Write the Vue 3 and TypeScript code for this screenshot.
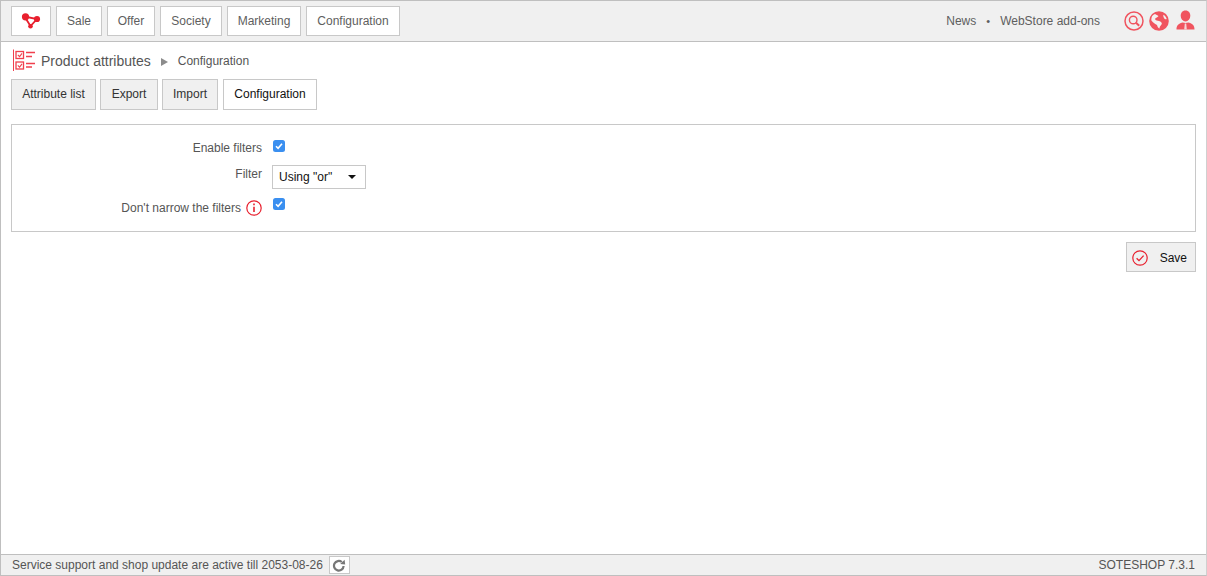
<script setup lang="ts">
const menu: string[] = ['Sale', 'Offer', 'Society', 'Marketing', 'Configuration']
const tabs: { label: string; active?: boolean }[] = [
  { label: 'Attribute list' },
  { label: 'Export' },
  { label: 'Import' },
  { label: 'Configuration', active: true },
]
</script>

<template>
  <div class="page">
    <header class="top">
      <a class="nav-btn logo">
        <svg width="20" height="16" viewBox="0 0 20 16">
          <path d="M3.5 3.5 L16 6 L9.5 13 Z" fill="none" stroke="#e8202e" stroke-width="1.8" />
          <circle cx="4.5" cy="3.8" r="3.6" fill="#e8202e" />
          <circle cx="16" cy="6" r="3.1" fill="#e8202e" />
          <circle cx="9.5" cy="13.2" r="2.3" fill="#e8202e" />
        </svg>
      </a>
      <nav class="menu">
        <a v-for="m in menu" :key="m" class="nav-btn">{{ m }}</a>
      </nav>
      <div class="right">
        <span class="link">News</span>
        <span class="dot">•</span>
        <span class="link">WebStore add-ons</span>
        <div class="icons">
          <svg width="20" height="20" viewBox="0 0 20 20" fill="none" stroke="#f0545f">
            <circle cx="10" cy="10" r="9" stroke-width="1.5" />
            <circle cx="9.2" cy="9" r="3.8" stroke-width="1.4" />
            <path d="M12 11.8 L15.2 14.8" stroke-width="2" />
          </svg>
          <svg width="20" height="20" viewBox="0 0 20 20">
            <circle cx="10" cy="10" r="9.8" fill="#f0545f" />
            <path d="M3.2 5 C4 4 5 3.5 6 3 C7 4 8.5 4.2 9.5 5 C9 6.5 6.8 6.2 6 8 C6.5 9.5 8.5 9.5 10 10 C12 10.5 13 11.5 12.8 13 C12 14.5 10.5 15 10.5 17.5 C9.2 17.2 8.5 15.5 8 14 C6.5 13 4 11.5 2.4 9.5 C2.2 8 2.5 6.3 3.2 5 Z M14.5 3.8 C16 4.8 17.2 6.3 17.7 8 C16.5 8.6 15.5 8.2 15 7 C14.5 6 14 5 14.5 3.8 Z" fill="#f4f0f0" />
          </svg>
          <svg class="user" width="19" height="21" viewBox="0 0 19 21">
            <path d="M9.5 0.5 C12.8 0.5 14.3 3 14.3 5.8 C14.3 8.8 12.2 11.4 9.5 11.4 C6.8 11.4 4.7 8.8 4.7 5.8 C4.7 3 6.2 0.5 9.5 0.5 Z" fill="#f0545f" />
            <path d="M0.5 19.5 C0.5 16 1.5 14 6.5 12.4 L9.5 13 L12.5 12.4 C17.5 14 18.5 16 18.5 19.5 Z" fill="#f0545f" />
            <path d="M8.8 13.5 H10.2 L10.8 19.5 H8.2 Z" fill="#f7d5d7" />
          </svg>
        </div>
      </div>
    </header>

    <main class="content">
      <div class="crumbs">
        <svg class="crumb-icon" width="24" height="23" viewBox="0 0 24 23" fill="none" stroke="#f0404e">
          <path d="M0.5 0.5 V22" stroke-width="1" />
          <rect x="3" y="2.5" width="7.5" height="7" stroke-width="1.3" />
          <rect x="3" y="13" width="7.5" height="7" stroke-width="1.3" />
          <path d="M4.8 5.8 L6.6 7.6 L9 4.4 M4.8 16.3 L6.6 18.1 L9 14.9" stroke-width="1.1" />
          <path d="M13 3.5 H22 M13 7.5 H19 M13 14.5 H22 M13 18 H19" stroke-width="1.5" />
        </svg>
        <span class="crumb-main">Product attributes</span>
        <span class="crumb-arrow"></span>
        <span class="crumb-sub">Configuration</span>
      </div>

      <div class="tabs">
        <a v-for="t in tabs" :key="t.label" class="tab" :class="{ active: t.active }">{{ t.label }}</a>
      </div>

      <section class="panel">
        <div class="row row-first">
          <div class="label">Enable filters</div>
          <span class="check">
            <svg width="12" height="12" viewBox="0 0 12 12"><path d="M3 6.2 L5.1 8.3 L9 3.8" fill="none" stroke="#fff" stroke-width="1.6" /></svg>
          </span>
        </div>
        <div class="row row-filter">
          <div class="label">Filter</div>
          <div class="select"><span>Using "or"</span><i class="caret"></i></div>
        </div>
        <div class="row row-last">
          <div class="label">
            Don't narrow the filters
            <svg class="info" width="16" height="16" viewBox="0 0 16 16" fill="none" stroke="#e8202e">
              <circle cx="8" cy="8" r="7.2" stroke-width="1.2" />
              <path d="M8 6.8 V12" stroke-width="1.6" />
              <path d="M8 3.6 V5.2" stroke-width="1.6" />
            </svg>
          </div>
          <span class="check">
            <svg width="12" height="12" viewBox="0 0 12 12"><path d="M3 6.2 L5.1 8.3 L9 3.8" fill="none" stroke="#fff" stroke-width="1.6" /></svg>
          </span>
        </div>
      </section>

      <div class="actions">
        <a class="save">
          <svg width="16" height="16" viewBox="0 0 16 16" fill="none" stroke="#e8202e">
            <circle cx="8" cy="8" r="7.2" stroke-width="1.2" />
            <path d="M4.6 8.2 L7 10.6 L11.6 5.6" stroke-width="1.3" />
          </svg>
          <span>Save</span>
        </a>
      </div>
    </main>

    <footer class="bottom">
      <span>Service support and shop update are active till 2053-08-26</span>
      <a class="refresh">
        <svg width="14" height="13" viewBox="0 0 14 13" fill="none">
          <path d="M11.6 7 A4.8 4.8 0 1 1 9.8 3" stroke="#777" stroke-width="2.2" />
          <path d="M8.2 5 L13.2 5.6 L12.6 0.8 Z" fill="#777" />
        </svg>
      </a>
      <span class="version">SOTESHOP 7.3.1</span>
    </footer>
  </div>
</template>

<style>
html, body { margin: 0; padding: 0; background: #fff; }
</style>

<style scoped>
.page {
  box-sizing: border-box;
  width: 1207px;
  height: 576px;
  display: flex;
  flex-direction: column;
  border: 1px solid #bfbfbf;
  border-right-color: #d0d0d0;
  font-family: "Liberation Sans", Arial, sans-serif;
  font-size: 12px;
  color: #555;
  overflow: hidden;
}
.top {
  flex: none;
  box-sizing: border-box;
  height: 41px;
  display: flex;
  align-items: flex-start;
  padding: 5px 0 0 10px;
  background: #f0f0f0;
  border-bottom: 1px solid #bfbfbf;
}
.nav-btn {
  box-sizing: border-box;
  height: 30px;
  display: flex;
  align-items: center;
  justify-content: center;
  background: #fff;
  border: 1px solid #c8c8c8;
  color: #5e5e5e;
}
.logo { width: 40px; }
.logo svg { margin-top: -1px; margin-right: 0; }
.menu { display: flex; gap: 5px; margin-left: 5px; }
.menu .nav-btn:nth-child(1) { width: 46px; }
.menu .nav-btn:nth-child(2) { width: 48px; }
.menu .nav-btn:nth-child(3) { width: 62px; }
.menu .nav-btn:nth-child(4) { width: 74px; }
.menu .nav-btn:nth-child(5) { width: 94px; }
.right {
  margin-left: auto;
  display: flex;
  align-items: center;
  height: 30px;
  padding-right: 11px;
  color: #5e5e5e;
}
.dot { margin: 0 10px; font-size: 11px; }
.icons { display: flex; align-items: center; gap: 5px; margin-left: 24px; }
.user { margin-left: 2px; margin-top: -2px; }
.content {
  flex: 1;
  display: flex;
  flex-direction: column;
  padding: 0 10px;
  background: #fff;
  min-height: 0;
}
.crumbs {
  display: flex;
  align-items: center;
  height: 37px;
  padding-left: 2px;
}
.crumb-icon { margin-right: 4px; }
.crumb-main { font-size: 14px; color: #555; }
.crumb-arrow {
  width: 0;
  height: 0;
  margin: 2px 10px 0 10px;
  border-left: 7px solid #8c8c8c;
  border-top: 4px solid transparent;
  border-bottom: 4px solid transparent;
}
.crumb-sub { color: #555; }
.tabs { display: flex; gap: 4px; }
.tab {
  box-sizing: border-box;
  height: 31px;
  padding-bottom: 2px;
  display: flex;
  align-items: center;
  justify-content: center;
  background: #f0f0f0;
  border: 1px solid #c8c8c8;
  color: #333;
}
.tab:nth-child(1) { width: 85px; }
.tab:nth-child(2) { width: 58px; }
.tab:nth-child(3) { width: 56px; }
.tab:nth-child(4) { width: 94px; }
.tab.active { background: #fff; color: #111; margin-left: 1px; }
.panel {
  box-sizing: border-box;
  height: 108px;
  margin-top: 14px;
  border: 1px solid #c8c8c8;
  padding-top: 15px;
  display: flex;
  flex-direction: column;
}
.row {
  display: grid;
  grid-template-columns: 250px auto;
  column-gap: 10px;
  justify-content: start;
  align-items: start;
}
.label {
  display: flex;
  align-items: center;
  justify-content: flex-end;
  gap: 5px;
  color: #555;
  line-height: 14px;
}
.row-first .label { padding-top: 1px; }
.row-first .check { margin-left: 1px; }
.row-filter { margin-top: 10px; }
.row-filter .label { padding-top: 2px; }
.row-last { margin-top: 9px; }
.row-last .label { height: 16px; margin-top: 2px; }
.row-last .check { margin-left: 1px; }
.check {
  box-sizing: border-box;
  width: 12px;
  height: 12px;
  display: block;
  border-radius: 2.5px;
  background: #3a8ff0;
}
.check svg { display: block; }
.select {
  box-sizing: border-box;
  width: 94px;
  height: 24px;
  display: flex;
  align-items: center;
  justify-content: space-between;
  padding: 0 9px 0 6px;
  background: #fff;
  border: 1px solid #c8c8c8;
  color: #111;
}
.caret {
  width: 0;
  height: 0;
  border-top: 4px solid #111;
  border-left: 4px solid transparent;
  border-right: 4px solid transparent;
}
.actions { display: flex; justify-content: flex-end; margin-top: 10px; }
.save {
  box-sizing: border-box;
  width: 70px;
  height: 30px;
  display: flex;
  align-items: center;
  justify-content: space-between;
  padding: 1px 8px 0 5px;
  background: #f0f0f0;
  border: 1px solid #c8c8c8;
  color: #111;
}
.bottom {
  flex: none;
  box-sizing: border-box;
  height: 21px;
  display: flex;
  align-items: center;
  padding: 0 11px;
  background: #f0f0f0;
  border-top: 1px solid #bfbfbf;
  color: #555;
}
.refresh {
  box-sizing: border-box;
  width: 21px;
  height: 18px;
  margin-left: 6px;
  display: flex;
  align-items: center;
  justify-content: center;
  background: #fff;
  border: 1px solid #c8c8c8;
}
.version { margin-left: auto; }
</style>
